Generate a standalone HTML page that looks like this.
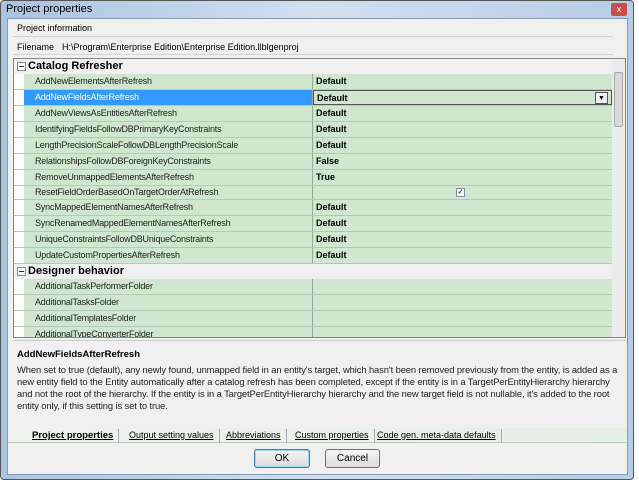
<!DOCTYPE html>
<html><head><style>
*{margin:0;padding:0;box-sizing:border-box}
body{width:639px;height:484px;background:#fff;font-family:"Liberation Sans",sans-serif;font-size:9px;color:#000;position:relative;overflow:hidden}
.abs{position:absolute}
.win{left:0;top:0;width:634px;height:480px;background:linear-gradient(90deg,#a9c4e0,#cfe0f1 50%,#b7cde6);border:1px solid #555;border-radius:4px}
.title{left:6px;top:3px;font-size:11px;color:#000}
.client{left:7px;top:18px;width:621px;height:457px;background:#f0f0f0;border:1px solid #8a9ab0}
.grid{left:13px;top:58px;width:613px;height:280px;border:1px solid #828790;background:#fff;overflow:hidden}
.row{position:absolute;left:0;width:598px;height:16px;border-bottom:1px solid #b8c8b8}
.nm{position:absolute;left:10px;width:289px;height:100%;background:#cfe7cf;border-right:1px solid #9aa89a;padding-left:11px;line-height:15px;font-size:9px;color:#222;letter-spacing:-0.2px}
.val{position:absolute;left:299px;right:0;height:100%;background:#cfe7cf;padding-left:3px;line-height:15px;font-weight:bold;font-size:9px}
.hdr{position:absolute;left:0;width:598px;height:15px;background:#f0f0f0;font-weight:bold;font-size:11px;padding-left:14px;line-height:14px}
.hdr:before{content:"";position:absolute;left:3px;top:3px;width:7px;height:7px;border:1px solid #888;background:#fff}
.hdr:after{content:"";position:absolute;left:5px;top:7px;width:5px;height:1px;background:#333}
.sb{left:612px;top:59px;width:13px;height:278px;background:#ececec}
.tab{position:absolute;top:429px;height:14px;font-size:9px;line-height:13px;padding:0 5px;border-right:1px solid #aab;text-decoration:underline}
.btn{position:absolute;top:449px;height:19px;border:1px solid #707070;border-radius:3px;background:linear-gradient(#f5f5f5,#dcdcdc);text-align:center;line-height:17px;font-size:10px}
</style></head><body>
<div class="abs win"></div>
<div class="abs title">Project properties</div>
<div class="abs" style="left:611px;top:3px;width:16px;height:13px;background:#c75050;border-radius:2px;color:#fff;font-size:9px;text-align:center;line-height:13px">x</div>
<div class="abs client"></div>
<div class="abs" style="left:17px;top:23px;font-size:9px">Project information</div>
<div class="abs" style="left:13px;top:36px;width:600px;height:1px;background:#d5d5d5"></div>
<div class="abs" style="left:17px;top:42px;font-size:9px">Filename</div>
<div class="abs" style="left:62px;top:42px;font-size:9px">H:\Program\Enterprise Edition\Enterprise Edition.llblgenproj</div>
<div class="abs" style="left:13px;top:54px;width:600px;height:1px;background:#d5d5d5"></div>
<div class="abs grid">
<div class="hdr" style="top:0">Catalog Refresher</div>
<div class="row" style="top:15px"><div class="nm">AddNewElementsAfterRefresh</div><div class="val">Default</div></div>
<div class="row" style="top:31px"><div class="nm" style="background:#3399ff;color:#fff">AddNewFieldsAfterRefresh</div><div class="val" style="border:1px solid #555">Default<span style="position:absolute;right:3px;top:1px;width:13px;height:12px;border:1px solid #555;background:#eee;font-size:7px;text-align:center;line-height:11px">▼</span></div></div>
<div class="row" style="top:47px"><div class="nm">AddNewViewsAsEntitiesAfterRefresh</div><div class="val">Default</div></div>
<div class="row" style="top:63px"><div class="nm">IdentifyingFieldsFollowDBPrimaryKeyConstraints</div><div class="val">Default</div></div>
<div class="row" style="top:79px"><div class="nm">LengthPrecisionScaleFollowDBLengthPrecisionScale</div><div class="val">Default</div></div>
<div class="row" style="top:95px"><div class="nm">RelationshipsFollowDBForeignKeyConstraints</div><div class="val">False</div></div>
<div class="row" style="top:111px"><div class="nm">RemoveUnmappedElementsAfterRefresh</div><div class="val">True</div></div>
<div class="row" style="top:127px;height:14px"><div class="nm" style="line-height:13px">ResetFieldOrderBasedOnTargetOrderAtRefresh</div><div class="val"><span style="position:absolute;left:143px;top:2px;width:9px;height:9px;border:1px solid #8a8aa0;background:#fff;font-size:7px;line-height:8px;text-align:center;color:#335">✓</span></div></div>
<div class="row" style="top:141px"><div class="nm">SyncMappedElementNamesAfterRefresh</div><div class="val">Default</div></div>
<div class="row" style="top:157px"><div class="nm">SyncRenamedMappedElementNamesAfterRefresh</div><div class="val">Default</div></div>
<div class="row" style="top:173px"><div class="nm">UniqueConstraintsFollowDBUniqueConstraints</div><div class="val">Default</div></div>
<div class="row" style="top:189px"><div class="nm">UpdateCustomPropertiesAfterRefresh</div><div class="val">Default</div></div>
<div class="hdr" style="top:205px">Designer behavior</div>
<div class="row" style="top:220px"><div class="nm">AdditionalTaskPerformerFolder</div><div class="val"></div></div>
<div class="row" style="top:236px"><div class="nm">AdditionalTasksFolder</div><div class="val"></div></div>
<div class="row" style="top:252px"><div class="nm">AdditionalTemplatesFolder</div><div class="val"></div></div>
<div class="row" style="top:268px"><div class="nm">AdditionalTypeConverterFolder</div><div class="val"></div></div>
</div>
<div class="abs sb"><div style="position:absolute;left:2px;top:13px;width:9px;height:55px;background:#d8d8d8;border:1px solid #aaa;border-radius:2px"></div></div>
<div class="abs" style="left:13px;top:338px;width:613px;height:3px;border-bottom:1px solid #ccc"></div>
<div class="abs" style="left:17px;top:349px;font-weight:bold;font-size:9.5px">AddNewFieldsAfterRefresh</div>
<div class="abs" style="left:17px;top:364px;width:608px;font-size:9.4px;line-height:12px;color:#222;letter-spacing:-0.1px">When set to true (default), any newly found, unmapped field in an entity's target, which hasn't been removed previously from the entity, is added as a new entity field to the Entity automatically after a catalog refresh has been completed, except if the entity is in a TargetPerEntityHierarchy hierarchy and not the root of the hierarchy. If the entity is in a TargetPerEntityHierarchy hierarchy and the new target field is not nullable, it's added to the root entity only, if this setting is set to true.</div>
<div class="abs" style="left:8px;top:442px;width:619px;height:1px;background:#b8ccb8"></div>
<div class="abs" style="left:8px;top:428px;width:619px;height:14px;background:linear-gradient(90deg,#f0f0f0,#e6efe6)"></div>
<div class="tab" style="left:27px;font-weight:bold;font-size:9.5px">Project properties</div>
<div class="tab" style="left:124px">Output setting values</div>
<div class="tab" style="left:221px">Abbreviations</div>
<div class="tab" style="left:290px">Custom properties</div>
<div class="tab" style="left:372px">Code gen. meta-data defaults</div>
<div class="btn" style="left:254px;width:56px;border-color:#3c7fb1;box-shadow:inset 0 0 0 1px #9ed4f5">OK</div>
<div class="btn" style="left:325px;width:55px">Cancel</div>
</body></html>
